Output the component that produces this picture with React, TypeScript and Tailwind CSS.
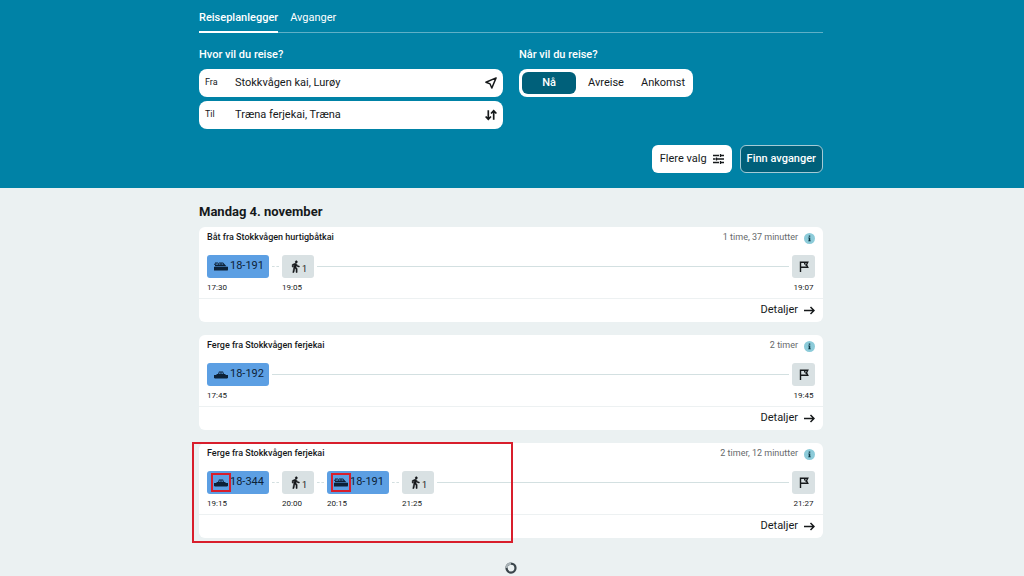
import { Fragment } from "react"

type Leg = {
  mode: "express" | "ferry" | "walk"
  label: string
  time: string
  marked?: boolean
}

type Trip = {
  title: string
  duration: string
  arrival: string
  legs: Leg[]
  marked?: boolean
}

const trips: Trip[] = [
  {
    title: "Båt fra Stokkvågen hurtigbåtkai",
    duration: "1 time, 37 minutter",
    arrival: "19:07",
    legs: [
      { mode: "express", label: "18-191", time: "17:30" },
      { mode: "walk", label: "1", time: "19:05" },
    ],
  },
  {
    title: "Ferge fra Stokkvågen ferjekai",
    duration: "2 timer",
    arrival: "19:45",
    legs: [{ mode: "ferry", label: "18-192", time: "17:45" }],
  },
  {
    title: "Ferge fra Stokkvågen ferjekai",
    duration: "2 timer, 12 minutter",
    arrival: "21:27",
    marked: true,
    legs: [
      { mode: "ferry", label: "18-344", time: "19:15", marked: true },
      { mode: "walk", label: "1", time: "20:00" },
      { mode: "express", label: "18-191", time: "20:15", marked: true },
      { mode: "walk", label: "1", time: "21:25" },
    ],
  },
]

function ExpressBoatIcon() {
  return (
    <svg viewBox="0 0 28 18" className="h-[9px] w-[14px]" fill="currentColor" aria-hidden="true">
      <path d="M0 3.500h5v1.800H0zM2 1h6v1.800H2z" />
      <path d="M2 8.500V6h4.500L10 1h8l4.500 5 2.500 2.500z" />
      <path d="M10.500 3h2.500v2H9zM15 3h2.200l1.800 2h-4z" fill="#5c9fe3" />
      <path d="M0 9.500h28v5c0 1.500-.5 2.500-1.500 2.500H0z" />
    </svg>
  )
}

function FerryIcon() {
  return (
    <svg viewBox="0 0 28 18" className="h-[9px] w-[14px]" fill="currentColor" aria-hidden="true">
      <path d="M0 10h28v5l-1.500 2h-25L0 15z" />
      <path d="M5 10V8h3l2-5h8l2 5h3v2z" />
      <path d="M10.800 5h2.400v2.500h-3.400zM14.800 5h2.400l1 2.500h-3.400z" fill="#5c9fe3" />
    </svg>
  )
}

function WalkIcon() {
  return (
    <svg viewBox="0 0 24 24" className="size-[13px]" fill="currentColor" stroke="currentColor" aria-hidden="true">
      <path d="M13.500 5.500c1.100 0 2-.9 2-2s-.9-2-2-2-2 .9-2 2 .9 2 2 2zM9.800 8.900 7 23h2.100l1.800-8 2.100 2v6h2v-7.500l-2.100-2 .6-3C14.800 12 16.800 13 19 13v-2c-1.900 0-3.500-1-4.300-2.400l-1-1.600c-.4-.6-1-1-1.700-1-.3 0-.5.1-.8.1L6 8.300V13h2V9.600l1.800-.7" />
    </svg>
  )
}

function LocationIcon() {
  return (
    <svg viewBox="0 0 20 20" className="size-3" fill="none" stroke="currentColor" strokeWidth="2.400" strokeLinejoin="round" aria-hidden="true">
      <path d="M18.500 1.500 1.500 8.700l7 2.800 2.800 7z" />
    </svg>
  )
}

function SwapIcon() {
  return (
    <svg viewBox="0 0 20 20" className="size-3" fill="none" stroke="currentColor" strokeWidth="2.800" aria-hidden="true">
      <path d="M5.500 2v15M1 12.500l4.500 4.500 4.500-4.500M14.500 18V3M10 7.500 14.500 3 19 7.500" />
    </svg>
  )
}

function FiltersIcon() {
  return (
    <svg viewBox="0 0 22 20" className="h-[10px] w-[11px]" fill="none" stroke="currentColor" strokeWidth="2.600" aria-hidden="true">
      <path d="M0 3h12M15 3h7M0 10h5M8 10h14M0 17h12M15 17h7M15 0v6M7 7v6M15 14v6" />
    </svg>
  )
}

function FlagIcon() {
  return (
    <svg viewBox="0 0 20 22" className="h-[11px] w-[10px]" fill="none" stroke="currentColor" strokeWidth="2.800" aria-hidden="true">
      <path d="M3 22V2.500h14.500L15 7.500l2.500 5H3" />
      <path d="M10 3h3v3.500h3v3.500h-3V7h-3z" fill="currentColor" stroke="none" />
    </svg>
  )
}

function ArrowIcon() {
  return (
    <svg viewBox="0 0 22 18" className="h-[9px] w-[11px]" fill="none" stroke="currentColor" strokeWidth="3" aria-hidden="true">
      <path d="M0 9h20M13 2l7 7-7 7" />
    </svg>
  )
}

function InfoIcon() {
  return (
    <svg viewBox="0 0 22 22" className="size-[11px]" aria-hidden="true">
      <circle cx="11" cy="11" r="11" fill="#8ccbd9" />
      <path d="M9.500 5h3v2.500h-3zM8.500 9h4v6h1v1.500h-5V15h1v-4.500h-1z" fill="#0b3440" />
    </svg>
  )
}

function Spinner() {
  return (
    <svg viewBox="0 0 24 24" className="size-3" fill="none" strokeWidth="4.500" role="img" aria-label="Laster">
      <circle cx="12" cy="12" r="9" stroke="#3a454b" />
      <path d="M3 12a9 9 0 0 1 9-9" stroke="#a9b3b7" />
    </svg>
  )
}

function LegChip({ leg }: { leg: Leg }) {
  if (leg.mode === "walk") {
    return (
      <div className="flex h-[23px] w-8 items-center justify-center rounded-[3px] bg-[#d9e1e3]">
        <WalkIcon />
        <span className="pt-1.5 text-[9px]">{leg.label}</span>
      </div>
    )
  }
  return (
    <div className="flex h-[23px] w-[62px] items-center gap-0.5 rounded-[3px] bg-[#5c9fe3] pl-[7px] text-[11px] text-[#0d2238]">
      <span className="relative">
        {leg.mode === "express" ? <ExpressBoatIcon /> : <FerryIcon />}
        {leg.marked && (
          <span className="absolute -inset-x-[3px] -inset-y-[5px] border-2 border-[#d81e2c]" />
        )}
      </span>
      {leg.label}
    </div>
  )
}

function TripCard({ trip }: { trip: Trip }) {
  return (
    <li className="relative rounded-md bg-white">
      <div className="flex h-7 items-center justify-between px-2 pb-1.5">
        <h3 className="text-[9px] font-medium">{trip.title}</h3>
        <div className="flex items-center gap-1.5 text-[9px] text-[#66696b]">
          {trip.duration}
          <InfoIcon />
        </div>
      </div>
      <div className="flex gap-[3px] px-2 text-[8px]">
        {trip.legs.map((leg, i) => (
          <Fragment key={leg.time}>
            {i > 0 && (
              <div className="flex h-[23px] w-[7px] items-center">
                <div className="w-full border-t border-dashed border-[#d3dfe0]" />
              </div>
            )}
            <div>
              <LegChip leg={leg} />
              <div className="flex h-5 items-center">{leg.time}</div>
            </div>
          </Fragment>
        ))}
        <div className="flex h-[23px] flex-1 items-center">
          <div className="h-px w-full bg-[#d3e0e1]" />
        </div>
        <div className="w-[23px]">
          <div className="flex h-[23px] items-center justify-center rounded-[3px] bg-[#d9e1e3]">
            <FlagIcon />
          </div>
          <div className="flex h-5 items-center justify-center">{trip.arrival}</div>
        </div>
      </div>
      <div className="flex h-6 items-center justify-end border-t border-[#edf1f2] px-2">
        <a href="#detaljer" className="flex items-center gap-1.5 text-[11px]">
          Detaljer
          <ArrowIcon />
        </a>
      </div>
      {trip.marked && (
        <div className="pointer-events-none absolute -top-px -bottom-[5px] -left-[7px] w-[321px] border-2 border-[#d81e2c]" />
      )}
    </li>
  )
}

export default function App() {
  return (
    <div className="min-h-screen bg-[#ebf1f2] font-['Roboto',sans-serif] text-[#16191b]">
      <header className="bg-[#0082a6] pb-[15px]">
        <div className="mx-auto max-w-[626px] pr-0.5">
          <nav className="flex gap-3 border-b border-[#5fb0c7] pt-[7px] text-[11px] text-white">
            <a href="#reiseplanlegger" className="-mb-px flex h-[26px] items-center border-b-2 border-white pb-px font-medium">
              Reiseplanlegger
            </a>
            <a href="#avganger" className="-mb-px flex h-[26px] items-center border-b-2 border-transparent pb-px">
              Avganger
            </a>
          </nav>
          <form onSubmit={(e) => e.preventDefault()}>
            <div className="grid grid-cols-2 gap-4 pt-3.5">
              <fieldset className="flex flex-col gap-1">
                <legend className="pb-1.5 text-[11px] leading-4 font-medium text-white">Hvor vil du reise?</legend>
                <div className="flex h-7 items-center rounded-lg bg-white px-1.5">
                  <label htmlFor="from" className="w-[30px] text-[9px]">Fra</label>
                  <input id="from" defaultValue="Stokkvågen kai, Lurøy" className="min-w-0 flex-1 text-[11px] outline-none" />
                  <button type="button" aria-label="Min posisjon"><LocationIcon /></button>
                </div>
                <div className="flex h-7 items-center rounded-lg bg-white px-1.5">
                  <label htmlFor="to" className="w-[30px] text-[9px]">Til</label>
                  <input id="to" defaultValue="Træna ferjekai, Træna" className="min-w-0 flex-1 text-[11px] outline-none" />
                  <button type="button" aria-label="Bytt retning"><SwapIcon /></button>
                </div>
              </fieldset>
              <fieldset>
                <legend className="pb-1.5 text-[11px] leading-4 font-medium text-white">Når vil du reise?</legend>
                <div className="flex h-7 w-[174px] gap-[3px] rounded-lg bg-white p-[3px] text-[11px]">
                  {["Nå", "Avreise", "Ankomst"].map((label) => (
                    <label
                      key={label}
                      className="relative flex flex-1 items-center justify-center rounded-md has-checked:bg-[#00607a] has-checked:font-medium has-checked:text-white"
                    >
                      <input type="radio" name="when" defaultChecked={label === "Nå"} className="sr-only" />
                      {label}
                    </label>
                  ))}
                </div>
              </fieldset>
            </div>
            <div className="flex justify-end gap-2 pt-4 text-[11px]">
              <button type="button" className="flex h-7 items-center gap-1.5 rounded-md bg-white px-2">
                Flere valg
                <FiltersIcon />
              </button>
              <button type="submit" className="h-7 rounded-md border border-[#a5cbd6] bg-[#00607a] px-1.5 font-medium text-white">
                Finn avganger
              </button>
            </div>
          </form>
        </div>
      </header>
      <main className="mx-auto max-w-[626px] pt-3.5 pr-0.5">
        <h2 className="pb-[5px] text-[13px] leading-5 font-bold">Mandag 4. november</h2>
        <ul className="flex flex-col gap-[13px]">
          {trips.map((trip) => (
            <TripCard key={trip.arrival} trip={trip} />
          ))}
        </ul>
        <div className="flex justify-center pt-6">
          <Spinner />
        </div>
      </main>
    </div>
  )
}
